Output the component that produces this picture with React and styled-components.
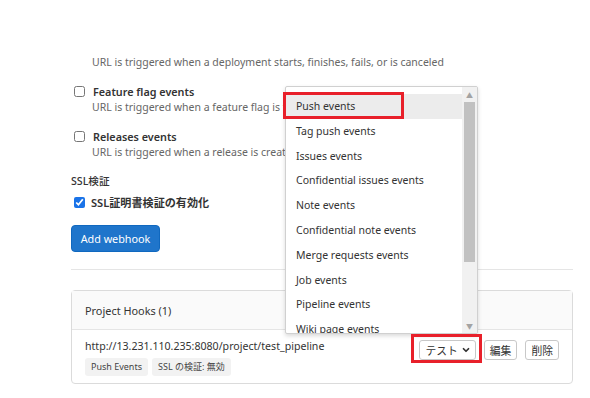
import React from 'react';
import styled, { createGlobalStyle } from 'styled-components';

const Global = createGlobalStyle`
  body {
    margin: 0;
    background: #fff;
    font-family: "Noto Sans", "Noto Sans CJK JP", sans-serif;
    color: #333;
  }
`;

const Page = styled.div`
  position: relative;
  width: 590px;
  height: 398px;
  overflow: hidden;
`;

const Form = styled.div`
  padding-top: 54px;
  padding-left: 71px;
  width: 502px;
`;

const Desc = styled.div`
  font-size: 10.5px;
  line-height: 16px;
  color: #666;
  padding-left: 21px;
  white-space: nowrap;
`;

const EventItem = styled.div`
  margin-top: ${p => p.top || '13px'};
`;

const CheckRow = styled.label`
  display: flex;
  align-items: center;
  height: 16px;
  font-size: 10.8px;
  font-weight: 600;
  color: #333;
`;

const Check = styled.input`
  width: 11px;
  height: 11px;
  margin: 0 ${p => p.gap || '8px'} 0 3px;
  accent-color: #1a73e8;
`;

const SectionLabel = styled.div`
  margin-top: 13px;
  font-size: 10.6px;
  font-weight: 500;
  line-height: 16px;
  color: #333;
`;

const SslRow = styled(CheckRow)`
  margin-top: 5px;
  font-size: 11.1px;
`;

const PrimaryButton = styled.button`
  margin-top: 15px;
  height: 27px;
  width: 89px;
  padding: 0;
  border: 1px solid #1068bf;
  border-radius: 4px;
  background: #1f75cb;
  color: #fff;
  font-family: inherit;
  font-size: 10.8px;
`;

const Divider = styled.hr`
  margin: 17px 0 20px;
  border: 0;
  border-top: 1px solid #e5e5e5;
`;

const Card = styled.div`
  border: 1px solid #dbdbdb;
  border-radius: 4px;
`;

const CardHeader = styled.div`
  height: 38px;
  display: flex;
  align-items: center;
  padding-left: 13px;
  background: #fafafa;
  border-bottom: 1px solid #e5e5e5;
  font-size: 10.9px;
  color: #333;
`;

const HookRow = styled.div`
  display: flex;
  justify-content: space-between;
  padding: 8px 13px 7px 13px;
`;

const HookInfo = styled.div`
  display: flex;
  flex-direction: column;
  gap: 3px;
`;

const HookUrl = styled.div`
  font-size: 10.6px;
  line-height: 17px;
  color: #333;
`;

const Badges = styled.div`
  display: flex;
  gap: 4px;
`;

const Badge = styled.span`
  height: 18px;
  line-height: 18px;
  padding: 0 6px;
  border-radius: 3px;
  background: #f2f2f2;
  font-size: 9px;
  color: #444;
`;

const Actions = styled.div`
  display: flex;
  gap: 8px;
  margin-top: 2px;
`;

const SmallButton = styled.button`
  height: 20px;
  padding: 0 5px;
  display: flex;
  align-items: center;
  justify-content: center;
  gap: 4px;
  white-space: nowrap;
  border: 1px solid #c8c8c8;
  border-radius: 3px;
  background: #fff;
  font-family: inherit;
  font-size: 10.8px;
  color: #333;
  min-width: ${p => p.w || 'auto'};
`;

const Menu = styled.div`
  position: absolute;
  left: 285px;
  top: 86px;
  width: 191px;
  height: 246px;
  display: flex;
  background: #fff;
  border: 1px solid #d0d0d0;
  box-shadow: 0 2px 4px rgba(0, 0, 0, 0.15);
  border-radius: 2px;
  overflow: hidden;
`;

const MenuList = styled.div`
  flex: 1;
  padding-top: 7px;
`;

const MenuItem = styled.div`
  height: 24.8px;
  line-height: 24.8px;
  padding-left: 10px;
  font-size: 10.5px;
  color: #333;
  background: ${p => (p.active ? '#ececec' : 'transparent')};
`;

const Scrollbar = styled.div`
  width: 15px;
  background: #f1f1f1;
  display: flex;
  flex-direction: column;
  align-items: center;
`;

const Arrow = styled.div`
  height: 15px;
  display: flex;
  align-items: center;
  justify-content: center;
  color: #a3a3a3;
  font-size: 7px;
`;

const Thumb = styled.div`
  width: 11px;
  height: 160px;
  background: #c1c1c1;
`;

const Spacer = styled.div`
  flex: 1;
`;

const Highlight = styled.div`
  position: absolute;
  border: 3px solid #e8202a;
  box-sizing: border-box;
  pointer-events: none;
`;

const events = [
  'Push events',
  'Tag push events',
  'Issues events',
  'Confidential issues events',
  'Note events',
  'Confidential note events',
  'Merge requests events',
  'Job events',
  'Pipeline events',
  'Wiki page events',
];

function Chevron() {
  return (
    <svg width="8" height="8" viewBox="0 0 16 16">
      <path d="M3 5.5 L8 10.5 L13 5.5" fill="none" stroke="#333" strokeWidth="3.5" strokeLinecap="round" strokeLinejoin="round" />
    </svg>
  );
}

export default function App() {
  return (
    <Page>
      <Global />
      <Form>
        <Desc>URL is triggered when a deployment starts, finishes, fails, or is canceled</Desc>
        <EventItem top="13px">
          <CheckRow><Check type="checkbox" />Feature flag events</CheckRow>
          <Desc>URL is triggered when a feature flag is turned on or off</Desc>
        </EventItem>
        <EventItem>
          <CheckRow><Check type="checkbox" />Releases events</CheckRow>
          <Desc>URL is triggered when a release is created/updated</Desc>
        </EventItem>
        <SectionLabel>SSL検証</SectionLabel>
        <SslRow><Check type="checkbox" defaultChecked gap="6px" />SSL証明書検証の有効化</SslRow>
        <PrimaryButton>Add webhook</PrimaryButton>
        <Divider />
        <Card>
          <CardHeader>Project Hooks (1)</CardHeader>
          <HookRow>
            <HookInfo>
              <HookUrl>http://13.231.110.235:8080/project/test_pipeline</HookUrl>
              <Badges>
                <Badge>Push Events</Badge>
                <Badge>SSL の検証: 無効</Badge>
              </Badges>
            </HookInfo>
            <Actions>
              <SmallButton w="53px">テスト<Chevron /></SmallButton>
              <SmallButton w="33px">編集</SmallButton>
              <SmallButton w="33px">削除</SmallButton>
            </Actions>
          </HookRow>
        </Card>
      </Form>
      <Menu>
        <MenuList>
          {events.map((e, i) => (
            <MenuItem key={e} active={i === 0}>{e}</MenuItem>
          ))}
        </MenuList>
        <Scrollbar>
          <Arrow>▲</Arrow>
          <Thumb />
          <Spacer />
          <Arrow>▼</Arrow>
        </Scrollbar>
      </Menu>
      <Highlight style={{ left: 283, top: 92, width: 121, height: 27 }} />
      <Highlight style={{ left: 411, top: 334, width: 71, height: 29 }} />
    </Page>
  );
}
